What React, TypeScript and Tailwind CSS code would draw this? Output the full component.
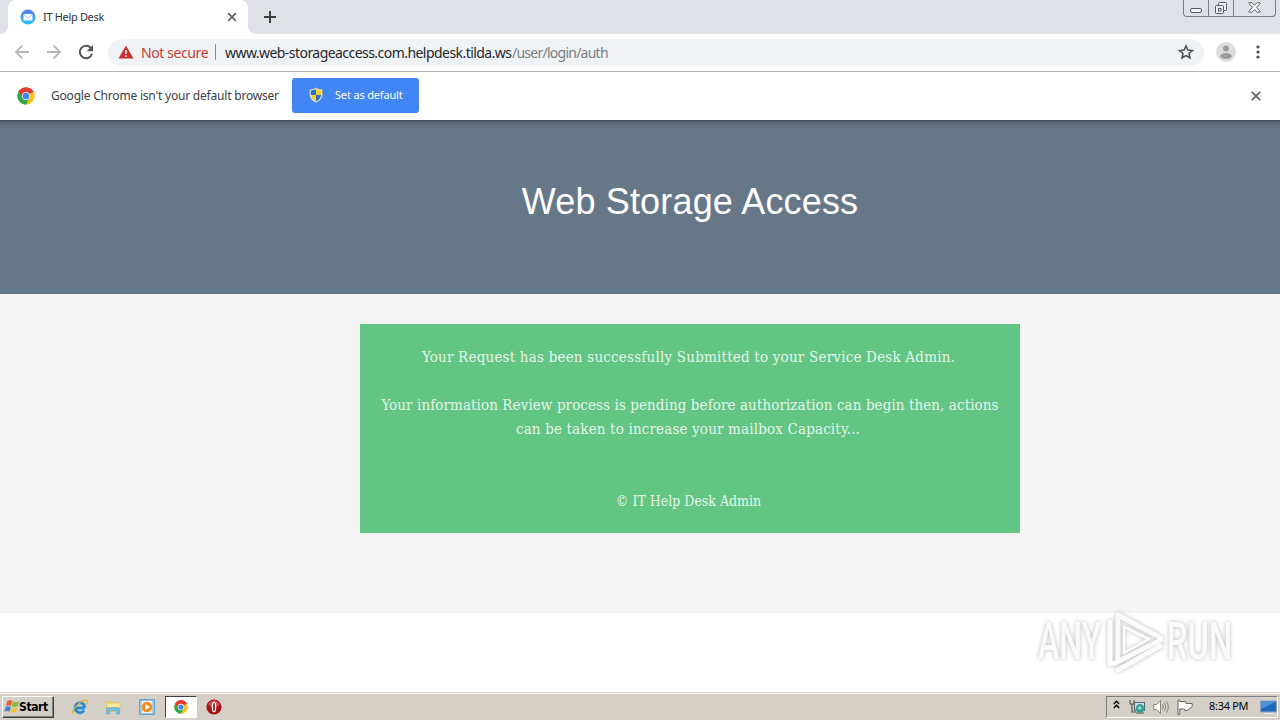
import React from "react";

const ui = "font-['Noto_Sans','DejaVu_Sans',sans-serif]";

function ChromeLogo({ className }: { className: string }) {
  return (
    <svg className={className} viewBox="0 0 48 48">
      <circle cx="24" cy="24" r="23" fill="#fbc116" />
      <path d="M24 24 L4.1 12.5 A23 23 0 0 1 43.9 12.5 Z" fill="#e33b2e" />
      <path d="M24 13 H44.2 A23 23 0 0 0 4.1 12.5 L14.5 29.5 Z" fill="#e33b2e" />
      <path d="M4.1 12.5 A23 23 0 0 0 24 47 L33.5 29.5 L14.5 29.5 Z" fill="#2da94f" />
      <circle cx="24" cy="24" r="11" fill="#fff" />
      <circle cx="24" cy="24" r="9" fill="#4688f1" />
    </svg>
  );
}

function TabStrip() {
  return (
    <div className="flex h-[34px] shrink-0 bg-[#dee1e6]">
      <div className="w-2 bg-white">
        <div className="h-full rounded-br-lg bg-[#dee1e6]" />
      </div>
      <div className="flex w-60 items-center rounded-t-lg bg-white pl-3 pr-[11px]">
        <svg className="size-4" viewBox="0 0 16 16">
          <defs>
            <linearGradient id="mail" x1="0" y1="0" x2="0" y2="1">
              <stop offset="0" stopColor="#5a78f0" />
              <stop offset="1" stopColor="#22c8f4" />
            </linearGradient>
          </defs>
          <circle cx="8" cy="8" r="7.5" fill="url(#mail)" />
          <rect x="3.5" y="5" width="9" height="6.5" rx="1" fill="#fff" />
          <path d="M3.8 5.5 L8 8.8 L12.2 5.5" fill="none" stroke="#78b8f2" strokeWidth=".8" />
        </svg>
        <span className={`${ui} ml-[7px] flex-1 whitespace-nowrap text-[11px] tracking-[-0.33px] text-[#303236]`}>IT Help Desk</span>
        <svg className="size-[10px]" viewBox="0 0 10 10" stroke="#5f6368" strokeWidth="1.7">
          <path d="M1.2 1.2 L8.8 8.8 M8.8 1.2 L1.2 8.8" />
        </svg>
      </div>
      <div className="w-2 bg-white">
        <div className="h-full rounded-bl-lg bg-[#dee1e6]" />
      </div>
      <svg className="ml-2 mt-[11px] size-3" viewBox="0 0 12 12" stroke="#3c4043" strokeWidth="2">
        <path d="M6 0 V12 M0 6 H12" />
      </svg>
      <div className="ml-auto mr-1 flex h-[17px] w-[93px] rounded-b-[4px] border border-t-0 border-[#777b84]">
        <div className="flex w-[25px] items-end justify-center border-r border-[#777b84] pb-[3px]">
          <div className="h-[5px] w-3 rounded-[2px] border border-[#555963] bg-[#f1f2f4]" />
        </div>
        <div className="flex w-[25px] justify-center border-r border-[#777b84] pt-[1px]">
          <svg className="size-[14px]" viewBox="0 0 14 14" fill="#eceef1" stroke="#555963">
            <rect x="4.5" y="1.5" width="8" height="8" rx="1" />
            <rect x="1.5" y="4.5" width="8" height="8" rx="1" />
            <rect x="4.5" y="7.5" width="2.5" height="2.5" />
          </svg>
        </div>
        <div className="flex flex-1 justify-center pt-[2px]">
          <svg className="h-[11px] w-[13px]" viewBox="0 0 13 11" fill="#f1f2f4" stroke="#555963" strokeWidth=".9">
            <path d="M1 .7 H4 L6.5 3.2 L9 .7 H12 V1.6 L8.6 5.4 L12 9.2 V10.2 H9 L6.5 7.6 L4 10.2 H1 V9.2 L4.4 5.4 L1 1.6 Z" />
          </svg>
        </div>
      </div>
    </div>
  );
}

function Toolbar() {
  return (
    <div className="flex h-[38px] shrink-0 items-center border-b border-[#b3b4b5] bg-white pb-px pl-[14px] pr-[14px]">
      <svg className="size-4" viewBox="0 0 16 16" fill="none" stroke="#b4b6b8" strokeWidth="1.8">
        <path d="M15 8 H2 M8.3 1.7 L2 8 L8.3 14.3" />
      </svg>
      <svg className="ml-4 size-4" viewBox="0 0 16 16" fill="none" stroke="#b4b6b8" strokeWidth="1.8">
        <path d="M1 8 H14 M7.7 1.7 L14 8 L7.7 14.3" />
      </svg>
      <svg className="ml-4 size-4" viewBox="0 0 16 16">
        <path d="M13 4.2 A6.2 6.2 0 1 0 14 9.8" fill="none" stroke="#505357" strokeWidth="2" />
        <path d="M15 1 V7.3 H8.7 Z" fill="#505357" />
      </svg>
      <div className="ml-[14px] flex h-[27px] w-[1096px] items-center rounded-full bg-[#f0f3f5] pl-[10px] pr-[10px]">
        <svg className="h-[14px] w-4" viewBox="0 0 16 14">
          <path d="M8 .5 L15.5 13.5 H.5 Z" fill="#c9302c" />
          <path d="M8 5 V9 M8 10.3 V12" stroke="#fff" strokeWidth="1.6" />
        </svg>
        <span className={`${ui} ml-[7px] w-[68px] whitespace-nowrap text-[14px] tracking-[-0.4px] text-[#ca3b36]`}>Not secure</span>
        <div className="ml-[6px] h-4 w-px bg-[#888b90]" />
        <span className={`${ui} ml-[9px] w-[287px] whitespace-nowrap text-[14px] tracking-[-0.55px] text-[#25272b]`}>www.web-storageaccess.com.helpdesk.tilda.ws</span>
        <span className={`${ui} flex-1 whitespace-nowrap text-[14px] tracking-[-0.75px] text-[#7c7f83]`}>/user/login/auth</span>
        <svg className="size-4" viewBox="0 0 24 24" fill="none" stroke="#4b4e53" strokeWidth="2.3">
          <path d="M12 2.8 L14.8 9.1 L21.7 9.8 L16.5 14.3 L18 21 L12 17.5 L6 21 L7.5 14.3 L2.3 9.8 L9.2 9.1 Z" />
        </svg>
      </div>
      <svg className="ml-3 size-5" viewBox="0 0 20 20">
        <circle cx="10" cy="10" r="10" fill="#dcdcdc" />
        <circle cx="10" cy="6.6" r="3" fill="#9b9b9b" />
        <ellipse cx="10" cy="14" rx="5.8" ry="3" fill="#9b9b9b" />
      </svg>
      <svg className="ml-auto h-4 w-4" viewBox="0 0 16 16" fill="#4b4e53">
        <circle cx="8" cy="3" r="1.6" />
        <circle cx="8" cy="8" r="1.6" />
        <circle cx="8" cy="13" r="1.6" />
      </svg>
    </div>
  );
}

function InfoBar() {
  return (
    <div className="flex h-[48px] shrink-0 items-center bg-white pl-[17px] pr-[19px]">
      <ChromeLogo className="size-[18px]" />
      <span className={`${ui} ml-4 w-[241px] whitespace-nowrap text-[12px] tracking-[-0.2px] text-[#3c4043]`}>Google Chrome isn't your default browser</span>
      <button className="mb-[2px] flex h-[35px] w-[127px] items-center rounded-[3px] bg-[#4285f4] pl-4">
        <svg className="size-4" viewBox="0 0 16 16">
          <path d="M8 .5 C10 2 12 2.3 14.5 2.3 V7 C14.5 11 12 14 8 15.7 C4 14 1.5 11 1.5 7 V2.3 C4 2.3 6 2 8 .5 Z" fill="#dfe8ee" stroke="#8b8d78" strokeWidth=".6" />
          <path d="M8 2 V8 H2.8 V3.5 C5 3.4 6.5 3 8 2 Z M8 8 H13.2 C12.8 11 11 13 8 14.3 Z" fill="#2d70c4" />
          <path d="M8 2 C9.5 3 11 3.4 13.2 3.5 V8 H8 Z M2.8 8 H8 V14.3 C5 13 3.2 11 2.8 8 Z" fill="#f5cf38" />
        </svg>
        <span className={`${ui} ml-[11px] whitespace-nowrap text-[11px] tracking-[-0.17px] text-white`}>Set as default</span>
      </button>
      <svg className="ml-auto size-[10px]" viewBox="0 0 10 10" stroke="#66696d" strokeWidth="1.9">
        <path d="M.8 .8 L9.2 9.2 M9.2 .8 L.8 9.2" />
      </svg>
    </div>
  );
}

function Watermark() {
  return (
    <svg className="absolute left-[1030px] top-[604px] h-[72px] w-[250px] overflow-visible drop-shadow-[0_0_2px_rgba(0,0,0,0.3)]" viewBox="0 0 250 72">
      <g fill="#fff" fillOpacity=".88" fontFamily="Roboto, sans-serif" fontSize="51" fontWeight="500">
        <text transform="translate(8 55) scale(.63 1)">ANY</text>
        <text transform="translate(137 55) scale(.64 1)">RUN</text>
      </g>
      <g fill="none" stroke="#fff" strokeOpacity=".9" strokeWidth="5" strokeLinejoin="round" strokeLinecap="round">
        <path d="M88 56 V11 L131 34" />
        <path d="M80 18 V60 L85 59 L131 36" />
        <path d="M88 66 L130 42" />
        <path d="M94 23 V49 L119 35 Z" strokeWidth="2.5" />
      </g>
    </svg>
  );
}

function Page() {
  return (
    <main className="flex flex-1 flex-col bg-white">
      <div className="flex h-[174px] items-start justify-center border-t border-[#46505b] bg-[#667788] pl-[100px] pt-[59px] shadow-[inset_0_6px_4px_-4px_rgba(40,50,60,0.45)]">
        <h1 className="whitespace-nowrap font-['Liberation_Sans',Arial,sans-serif] text-[36px] leading-[44px] tracking-[0.17px] text-white">Web Storage Access</h1>
      </div>
      <div className="h-[319px] bg-[#f4f4f4] pl-[360px] pt-[30px]">
        <div className="h-[209px] w-[660px] bg-[#62c584] pt-[21px] text-center font-['DejaVu_Serif_Condensed','DejaVu_Serif',serif] text-[15px] leading-6 text-[#e3f6ea] [font-stretch:condensed]">
          <p className="whitespace-nowrap pr-[3px] tracking-[0.21px]">Your Request has been successfully Submitted to your Service Desk Admin.</p>
          <p className="mt-6 whitespace-nowrap tracking-[0.09px]">Your information Review process is pending before authorization can begin then, actions</p>
          <p className="whitespace-nowrap pr-1 tracking-[0.16px]">can be taken to increase your mailbox Capacity...</p>
          <p className="mt-12 whitespace-nowrap pr-[3px] text-[14px]">© IT Help Desk Admin</p>
        </div>
      </div>
    </main>
  );
}

function Taskbar() {
  return (
    <footer className="flex h-7 shrink-0 items-center border-t border-[#d4d0c8] bg-[#d4d0c8] pl-[2px] pr-[2px] shadow-[inset_0_1px_0_#fff]">
      <button className="flex h-[22px] w-[52px] items-center border border-b-[#404040] border-l-white border-r-[#404040] border-t-white pl-[1px] shadow-[inset_-1px_-1px_0_#808080]">
        <svg className="h-[15px] w-4 shrink-0" viewBox="0 0 16 15">
          <path d="M3.3 2 Q6 .5 8.3 2 L7 7 Q4.5 5.6 2 7 Z" fill="#e8602c" />
          <path d="M9 2.3 Q12 4 15 2.4 L13.6 7.3 Q11 8.7 7.8 7.2 Z" fill="#86b93c" />
          <path d="M1.7 7.9 Q4.5 6.5 6.8 7.9 L5.4 12.7 Q3 11.3 .3 12.7 Z" fill="#3f87d0" />
          <path d="M7.5 8.2 Q10.3 9.6 13.3 8.2 L12 13 Q9 14.4 6.2 12.9 Z" fill="#f7c23c" />
        </svg>
        <span className="-ml-px font-['DejaVu_Sans_Condensed','DejaVu_Sans',sans-serif] text-[12px] font-bold tracking-[-0.4px] text-black [font-stretch:condensed]">Start</span>
      </button>
      <svg className="ml-[18px] size-4" viewBox="0 0 16 16" fill="none">
        <path d="M12.7 9 H4.2 M12.2 11.5 A5 5 0 1 1 13 8.3" stroke="#238bd4" strokeWidth="2.8" />
        <path d="M1 14.8 C-1 12 8 1 14.3 1.2 C15.8 1.4 15 4 14 5.4" stroke="#e2ad2d" strokeWidth="1.3" />
      </svg>
      <svg className="ml-[17px] size-4" viewBox="0 0 16 16">
        <path d="M1 2 H6 L7 3.5 H14 V13 H1 Z" fill="#ecd06d" />
        <path d="M2 4 H15 V9 H2 Z" fill="#fae9a0" stroke="#ddb755" strokeWidth=".6" />
        <path d="M1.5 15 V10 Q1.5 8.7 3 8.7 H13 Q14.5 8.7 14.5 10 V15 H11.5 V11.8 H4.5 V15 Z" fill="#76bfe2" stroke="#4b9cc8" strokeWidth=".5" />
      </svg>
      <svg className="ml-[18px] size-4" viewBox="0 0 16 16">
        <rect x=".7" y=".7" width="14.6" height="14.6" fill="#aad3ef" stroke="#4a94cf" />
        <rect x="3" y="2" width="10" height="12" fill="#f6f6ec" />
        <circle cx="8" cy="8" r="5.2" fill="#f18a1d" />
        <path d="M6.5 5 L11 8 L6.5 11 Z" fill="#fff" />
      </svg>
      <div className="ml-[10px] flex h-[22px] w-8 items-center justify-center border border-b-white border-l-[#404040] border-r-white border-t-[#404040] bg-white">
        <ChromeLogo className="size-[14px]" />
      </div>
      <svg className="ml-[9px] size-4" viewBox="0 0 16 16">
        <circle cx="8" cy="8" r="7.6" fill="#a91217" />
        <path d="M2 6 A6.3 6.3 0 0 1 14 6 Q8 9 2 6" fill="#d3494d" />
        <ellipse cx="8" cy="8" rx="2.3" ry="5.3" fill="#fff" />
        <ellipse cx="8" cy="8" rx=".9" ry="4.3" fill="#8f1014" />
      </svg>
      <div className="ml-auto flex h-[22px] w-[172px] items-center border border-b-white border-l-[#808080] border-r-white border-t-[#808080] pl-[6px] pr-0">
        <svg className="mb-1 h-[9px] w-[7px]" viewBox="0 0 7 9" fill="none" stroke="#000" strokeWidth="1.4">
          <path d="M.8 4 L3.5 1.3 L6.2 4 M.8 8 L3.5 5.3 L6.2 8" />
        </svg>
        <svg className="ml-[9px] size-4" viewBox="0 0 16 16">
          <path d="M1 1 V5 H5 V1 M3 5 V13 H7" fill="none" stroke="#555" strokeWidth="1.2" />
          <rect x="5.5" y="3.5" width="10" height="8" fill="#cfe0e5" stroke="#52666d" />
          <path d="M7 14 H15" stroke="#555" />
          <circle cx="11" cy="9.5" r="4.4" fill="#379e91" />
          <path d="M8.5 9 Q11 5.5 13 9 Q11 12 8.5 9" fill="#9cd7cb" />
        </svg>
        <svg className="ml-2 size-4" viewBox="0 0 16 16" fill="none" stroke="#85837e">
          <path d="M.7 5.5 H3.5 L7.5 1.5 V14.5 L3.5 10.5 H.7 Z" fill="#fff" />
          <path d="M9.5 5.5 Q11 8 9.5 10.5 M11.5 3.8 Q14 8 11.5 12.2 M13.5 2.3 Q17 8 13.5 13.7" />
        </svg>
        <svg className="ml-2 size-4" viewBox="0 0 16 16" fill="#fff" stroke="#6b6964">
          <path d="M1 1 V15.5 H2.8 V10 H7.8 V11.5 H10.3 L15.2 7.5 V4.5 H9 V2.5 H2.8 V1 Z" />
        </svg>
        <span className={`${ui} ml-4 w-[41px] whitespace-nowrap text-[11px] tracking-[-0.3px] text-black`}>8:34 PM</span>
        <svg className="ml-[10px] h-4 w-[17px]" viewBox="0 0 17 16">
          <rect x=".5" y="2" width="16" height="11" fill="#2268bc" stroke="#8fa4bd" />
          <path d="M1 2.5 H16 L1 10 Z" fill="#4d91d8" />
          <path d="M4 14.5 H13" stroke="#e8edf2" />
        </svg>
      </div>
    </footer>
  );
}

export default function App() {
  return (
    <div className="relative flex h-[720px] w-[1280px] flex-col overflow-hidden bg-white">
      <TabStrip />
      <Toolbar />
      <InfoBar />
      <Page />
      <Watermark />
      <Taskbar />
    </div>
  );
}
